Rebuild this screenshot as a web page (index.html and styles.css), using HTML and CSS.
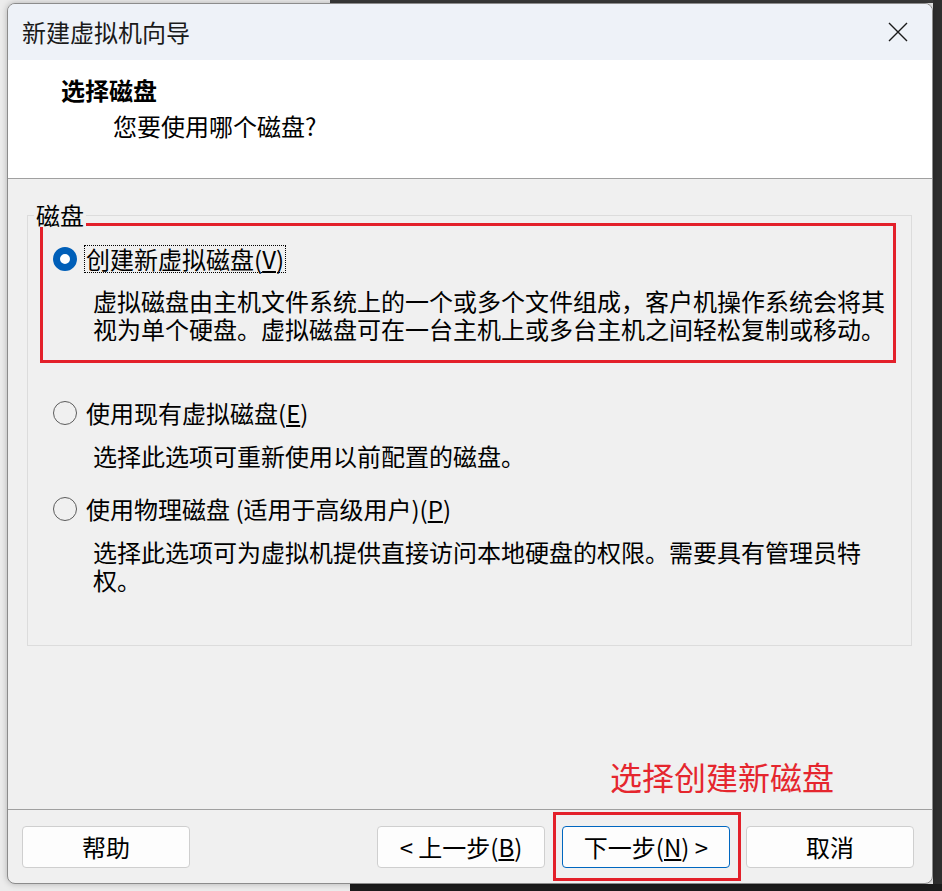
FILE: index.html
```html
<!DOCTYPE html>
<html lang="zh-CN">
<head>
<meta charset="utf-8">
<title>新建虚拟机向导</title>
<link rel="stylesheet" href="styles.css">
</head>
<body>
<div class="desk-top"></div>
<div class="desk-right"></div>
<div class="desk-bottom"></div>
<div class="window">
  <div class="titlebar">
    <span class="title">新建虚拟机向导</span>
    <span class="close">
      <svg width="20" height="20" viewBox="0 0 20 20"><path d="M1 1L19 19M19 1L1 19" stroke="#1a1a1a" stroke-width="1.4" fill="none"/></svg>
    </span>
  </div>
  <div class="header">
    <div class="h-title">选择磁盘</div>
    <div class="h-sub">您要使用哪个磁盘?</div>
  </div>
  <div class="body">
    <div class="group">
      <span class="legend">磁盘</span>
      <div class="highlight">
        <div class="option-row">
          <span class="radio checked"></span>
          <span class="label focus">创建新虚拟磁盘(<u>V</u>)</span>
        </div>
        <div class="desc d1">
          <div class="line">虚拟磁盘由主机文件系统上的一个或多个文件组成，客户机操作系统会将其</div>
          <div class="line">视为单个硬盘。虚拟磁盘可在一台主机上或多台主机之间轻松复制或移动。</div>
        </div>
      </div>
      <div class="option opt2">
        <div class="option-row">
          <span class="radio"></span>
          <span class="label">使用现有虚拟磁盘(<u>E</u>)</span>
        </div>
        <div class="desc">
          <div class="line">选择此选项可重新使用以前配置的磁盘。</div>
        </div>
      </div>
      <div class="option opt3">
        <div class="option-row">
          <span class="radio"></span>
          <span class="label">使用物理磁盘 (适用于高级用户)(<u>P</u>)</span>
        </div>
        <div class="desc">
          <div class="line">选择此选项可为虚拟机提供直接访问本地硬盘的权限。需要具有管理员特</div>
          <div class="line">权。</div>
        </div>
      </div>
    </div>
  </div>
  <div class="footer">
    <button class="btn">帮助</button>
    <button class="btn back">&lt; 上一步(<u>B</u>)</button>
    <button class="btn primary">下一步(<u>N</u>) &gt;</button>
    <button class="btn cancel">取消</button>
  </div>
  <div class="note">选择创建新磁盘</div>
  <div class="note-box"></div>
</div>
</body>
</html>
```
FILE: styles.css
```css
html, body {
  margin: 0;
  padding: 0;
}
body {
  width: 942px;
  height: 891px;
  position: relative;
  overflow: hidden;
  background: #ececec;
  font-family: "Noto Sans CJK SC", "Noto Sans", sans-serif;
}
.desk-top {
  position: absolute;
  left: 330px;
  top: 0;
  width: 612px;
  height: 3px;
  background: #3a3a3a;
}
.desk-right {
  position: absolute;
  left: 933px;
  top: 0;
  width: 9px;
  height: 891px;
  background: #2e2e2e;
}
.desk-bottom {
  position: absolute;
  left: 350px;
  top: 884px;
  width: 592px;
  height: 7px;
  background: #1c1c1c;
}
.window {
  position: absolute;
  left: 7px;
  top: 3px;
  width: 926px;
  height: 881px;
  box-sizing: border-box;
  border: 1px solid #8c8c8c;
  border-radius: 8px;
  overflow: hidden;
  background: #f0f0f0;
  display: flex;
  flex-direction: column;
  box-shadow: 0 0 6px rgba(0,0,0,0.25);
}
.titlebar {
  height: 56px;
  flex: none;
  background: #eef2f8;
  display: flex;
  align-items: center;
  justify-content: space-between;
  padding: 0 24px 0 14px;
}
.title {
  font-size: 24px;
  line-height: 28px;
  color: #1a1a1a;
}
.close {
  display: flex;
  width: 20px;
  height: 20px;
}
.header {
  height: 119px;
  flex: none;
  box-sizing: border-box;
  background: #ffffff;
  border-bottom: 1px solid #a0a0a0;
  padding: 16px 0 0 53px;
  color: #000;
}
.h-title {
  font-size: 24px;
  line-height: 28px;
  font-weight: bold;
}
.h-sub {
  font-size: 24px;
  line-height: 28px;
  margin-top: 8px;
  padding-left: 52px;
}
.body {
  flex: 1;
  padding: 36px 20px 0 19px;
}
.group {
  position: relative;
  height: 431px;
  box-sizing: border-box;
  border: 1px solid #dcdcdc;
}
.legend {
  position: absolute;
  left: 6px;
  top: -13px;
  padding: 0 2px;
  background: #f0f0f0;
  font-size: 24px;
  line-height: 24px;
  color: #000;
}
.highlight {
  margin: 7px 0 0 12px;
  width: 856px;
  height: 140px;
  box-sizing: border-box;
  border: 3px solid #e3202a;
  padding: 19px 0 0 10px;
}
.option-row {
  display: flex;
  align-items: center;
  height: 28px;
}
.radio {
  width: 24px;
  height: 24px;
  box-sizing: border-box;
  border-radius: 50%;
  border: 1.5px solid #5c5c5c;
  flex: none;
}
.radio.checked {
  border: 7.5px solid #005fb8;
  background: #ffffff;
}
.label {
  margin-left: 7px;
  border: 1px dotted transparent;
  padding: 0 1px;
  font-size: 24px;
  line-height: 26px;
  color: #000;
  white-space: nowrap;
}
.label.focus {
  border-color: #000;
}
.desc {
  margin: 15px 0 0 40px;
  font-size: 24px;
  color: #000;
  white-space: nowrap;
}
.desc .line {
  height: 28px;
  line-height: 28px;
}
.desc.d1 {
  margin-top: 14px;
}
.option {
  padding-left: 25px;
}
.opt2 {
  margin-top: 36px;
}
.opt3 {
  margin-top: 25px;
}
.footer {
  height: 74px;
  flex: none;
  box-sizing: border-box;
  border-top: 1px solid #a0a0a0;
  padding: 16px 18px 0 14px;
  display: flex;
  align-items: flex-start;
}
.btn {
  width: 168px;
  height: 42px;
  box-sizing: border-box;
  background: #fdfdfd;
  border: 1px solid #cfcfcf;
  border-radius: 4px;
  font-family: "Noto Sans CJK SC", "Noto Sans", sans-serif;
  font-size: 24px;
  line-height: 28px;
  color: #000;
  padding: 0;
}
.btn.back {
  margin-left: auto;
}
.btn.primary {
  margin-left: 17px;
  border-color: #0067c0;
}
.btn.cancel {
  margin-left: 16px;
}
.note {
  position: absolute;
  left: 602px;
  top: 752px;
  font-size: 32px;
  line-height: 40px;
  color: #e5262e;
  white-space: nowrap;
}
.note-box {
  position: absolute;
  left: 545px;
  top: 808px;
  width: 188px;
  height: 69px;
  box-sizing: border-box;
  border: 3px solid #e3202a;
}
```
